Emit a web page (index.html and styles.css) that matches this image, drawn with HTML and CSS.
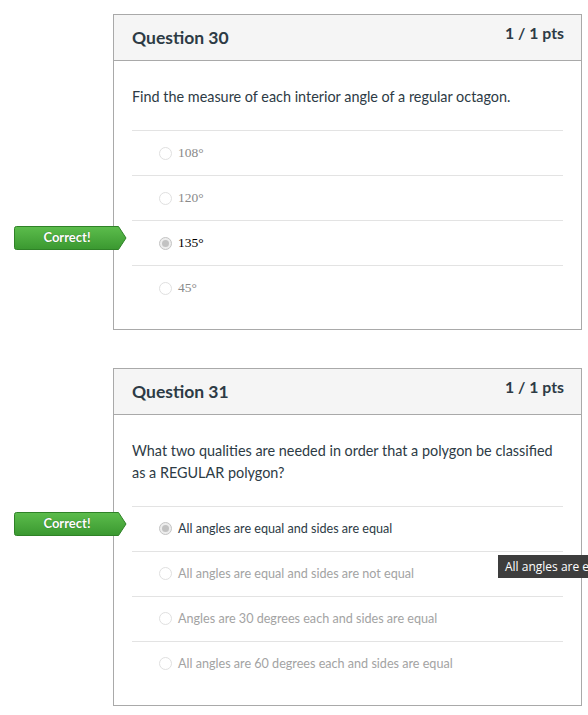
FILE: index.html
```html
<!DOCTYPE html>
<html lang="en">
<head>
<meta charset="utf-8">
<title>Quiz results</title>
<link rel="stylesheet" href="styles.css">
</head>
<body>
<div class="page">
  <section class="card">
    <header class="card-head">
      <h2 class="q-title">Question 30</h2>
      <span class="pts">1 / 1 pts</span>
    </header>
    <div class="card-body">
      <p class="q-text">Find the measure of each interior angle of a regular octagon.</p>
      <ul class="answers serif">
        <li class="answer"><span class="radio"></span><span class="label">108°</span></li>
        <li class="answer"><span class="radio"></span><span class="label">120°</span></li>
        <li class="answer selected">
          <span class="badge"><svg class="badge-shape" width="113" height="24" viewBox="0 0 113 24"><defs><linearGradient id="g1" x1="0" y1="0" x2="0" y2="1"><stop offset="0" stop-color="#5cbd4c"/><stop offset="1" stop-color="#3a9830"/></linearGradient></defs><path d="M2.5 0.5 H104.5 L112 12 L104.5 23.5 H2.5 Q0.5 23.5 0.5 21.5 V2.5 Q0.5 0.5 2.5 0.5 Z" fill="url(#g1)" stroke="#2f8227"/></svg><span class="badge-text">Correct!</span></span>
          <span class="radio"><span class="dot"></span></span><span class="label">135°</span>
        </li>
        <li class="answer"><span class="radio"></span><span class="label">45°</span></li>
      </ul>
    </div>
  </section>

  <section class="card">
    <header class="card-head">
      <h2 class="q-title">Question 31</h2>
      <span class="pts">1 / 1 pts</span>
    </header>
    <div class="card-body">
      <p class="q-text">What two qualities are needed in order that a polygon be classified as a REGULAR polygon?</p>
      <ul class="answers sans">
        <li class="answer selected">
          <span class="badge"><svg class="badge-shape" width="113" height="24" viewBox="0 0 113 24"><defs><linearGradient id="g2" x1="0" y1="0" x2="0" y2="1"><stop offset="0" stop-color="#5cbd4c"/><stop offset="1" stop-color="#3a9830"/></linearGradient></defs><path d="M2.5 0.5 H104.5 L112 12 L104.5 23.5 H2.5 Q0.5 23.5 0.5 21.5 V2.5 Q0.5 0.5 2.5 0.5 Z" fill="url(#g2)" stroke="#2f8227"/></svg><span class="badge-text">Correct!</span></span>
          <span class="radio"><span class="dot"></span></span><span class="label">All angles are equal and sides are equal</span>
        </li>
        <li class="answer">
          <span class="radio"></span><span class="label">All angles are equal and sides are not equal</span>
          <span class="tooltip">All angles are equal and sides are not equal</span>
        </li>
        <li class="answer"><span class="radio"></span><span class="label">Angles are 30 degrees each and sides are equal</span></li>
        <li class="answer"><span class="radio"></span><span class="label">All angles are 60 degrees each and sides are equal</span></li>
      </ul>
    </div>
  </section>
</div>
</body>
</html>
```

FILE: styles.css
```css
html, body {
  margin: 0;
  padding: 0;
  overflow: hidden;
  background: #fff;
}

body {
  font-family: Lato, "Noto Sans", sans-serif;
  color: #2d3b45;
}

.page {
  padding: 14px 0 0 113px;
  width: 469px;
}

.card {
  box-sizing: border-box;
  width: 469px;
  border: 1px solid #a9a9a9;
  background: #fff;
  margin-bottom: 38px;
}

.card-head {
  box-sizing: border-box;
  height: 46px;
  background: #f5f5f5;
  border-bottom: 1px solid #a9a9a9;
  padding: 0 17px 0 18px;
  display: flex;
  justify-content: space-between;
  align-items: flex-start;
}

.q-title {
  margin: 11px 0 0;
  font-size: 17.5px;
  line-height: 24px;
  font-weight: 700;
  color: #2d3b45;
}

.pts {
  margin-top: 9px;
  font-size: 15.8px;
  line-height: 18px;
  font-weight: 700;
  color: #2d3b45;
}

.card-body {
  padding: 25px 18px 19px;
}

.q-text {
  margin: 0 0 22.5px;
  font-size: 14.4px;
  line-height: 21.5px;
}

.answers {
  list-style: none;
  margin: 0;
  padding: 0;
}

.answer {
  position: relative;
  box-sizing: border-box;
  height: 45px;
  border-top: 1px solid #e3e3e3;
  display: flex;
  align-items: center;
  padding-left: 27px;
}

.radio {
  box-sizing: border-box;
  width: 13px;
  height: 13px;
  border-radius: 50%;
  border: 1px solid #e0e0e0;
  background: #fff;
  margin-right: 6px;
  display: flex;
  align-items: center;
  justify-content: center;
  flex: none;
}

.selected .radio {
  border-color: #c4c4c4;
  background: #ededed;
}

.dot {
  width: 7px;
  height: 7px;
  border-radius: 50%;
  background: #c2c2c2;
}

.serif .label {
  font-family: "Liberation Serif", "Times New Roman", serif;
  font-size: 13.5px;
  color: #8a8a8a;
}

.serif .selected .label {
  color: #000;
}

.sans .label {
  font-size: 12.6px;
  color: #a3a3a3;
}

.sans .selected .label {
  color: #2d3b45;
}

.badge {
  position: absolute;
  left: -118px;
  top: 5px;
  width: 113px;
  height: 24px;
}

.badge-shape {
  position: absolute;
  left: 0;
  top: 0;
  display: block;
}

.badge-text {
  position: relative;
  display: block;
  width: 106px;
  text-align: center;
  font-size: 13px;
  font-weight: 700;
  line-height: 23px;
  color: #fff;
  text-shadow: 0 0 1px rgba(0, 0, 0, 0.45);
}

.tooltip {
  position: absolute;
  left: 366px;
  top: 3px;
  height: 23px;
  line-height: 23px;
  padding: 0 7px;
  background: #3d3d3d;
  color: #fff;
  font-family: "Open Sans", "Noto Sans", sans-serif;
  font-size: 12px;
  white-space: nowrap;
}
```
